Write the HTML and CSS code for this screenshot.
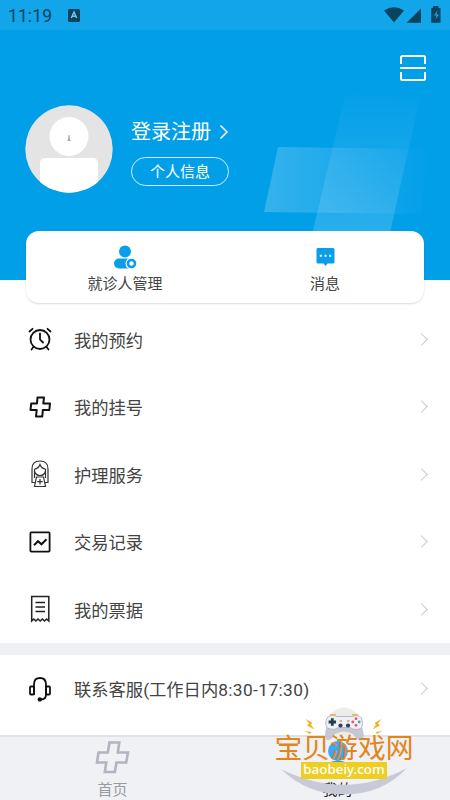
FILE: index.html
```html
<!DOCTYPE html>
<html lang="zh-CN">
<head>
<meta charset="utf-8">
<title>我的</title>
<link rel="stylesheet" href="styles.css">
</head>
<body>
<div class="app">
  <header class="hero">
    <svg class="hero-art" width="450" height="280" viewBox="0 0 450 280" aria-hidden="true">
      <defs>
        <linearGradient id="across" x1="0" x2="1" y1="0" y2="0"><stop offset="0" stop-color="#fff" stop-opacity=".2"/><stop offset="1" stop-color="#fff" stop-opacity="0"/></linearGradient>
        <linearGradient id="down" x1="0" x2="0" y1="0" y2="1"><stop offset="0" stop-color="#fff" stop-opacity=".01"/><stop offset="1" stop-color="#fff" stop-opacity=".19"/></linearGradient>
      </defs>
      <path d="M278 147L429 149L421 214L264 212Z" fill="url(#across)"/>
      <path d="M345 95L420 97L384 260L306 260Z" fill="url(#down)"/>
    </svg>
    <div class="status">
      <span class="clock">11:19</span>
      <svg class="status-app" width="12" height="13" viewBox="0 0 12 13"><rect width="12" height="13" rx="1.5" fill="#08435f"/><path d="M3.300 9L6 3L8.700 9M4.200 7.200H7.800" fill="none" stroke="#7fc4e6" stroke-width="1.400"/></svg>
      <svg class="status-icons" width="58" height="18" viewBox="0 0 58 18"><path d="M0 4.500Q10 -2 20 4.500L10 16.500Z M37 2.500V16.800H22.500Z M49 2V0H54.500V2H56.500V16.800H47.200V2Z" fill="#08435f"/><path d="M53.500 4L50 9.500h2.500L51.300 14L55 8.500h-2.400Z" fill="#18a2e8"/></svg>
    </div>
    <div class="scan">
      <svg width="28" height="28" viewBox="0 0 28 28" fill="none" stroke="#fff" stroke-width="2"><path d="M2 10V3.500Q2 2 3.500 2H24.500Q26 2 26 3.500V10M2 18V24.500Q2 26 3.500 26H24.500Q26 26 26 24.500V18M1 14H27"/></svg>
    </div>
    <div class="profile">
      <svg class="avatar" width="88" height="88" viewBox="0 0 88 88">
        <clipPath id="round"><circle cx="44" cy="44" r="43.700"/></clipPath>
        <g clip-path="url(#round)"><path fill="#e4e4e4" d="M0 0H88V88H0Z"/><circle cx="44" cy="31.500" r="19.500" fill="#fff"/><rect x="15" y="53" width="58" height="48" rx="5" fill="#fff"/><path d="M43.500 30h1l.5 4.500 1 1.500h-4l1-1.500Z" fill="#aaa"/></g>
      </svg>
      <div class="account">
        <a class="login">登录注册<svg width="10" height="16" viewBox="0 0 10 16"><path d="M1.500 1.500L8 8L1.500 14.500" fill="none" stroke="#fff" stroke-width="1.500"/></svg></a>
        <a class="info">个人信息</a>
      </div>
    </div>
  </header>

  <section class="card">
    <a class="shortcut">
      <svg width="24" height="26" viewBox="0 0 24 26"><circle cx="12" cy="7.500" r="6" fill="#0a9de9"/><rect x="1" y="14.500" width="20" height="10" rx="5" fill="#0a9de9"/><circle cx="18.500" cy="19.500" r="6" fill="#fff"/><circle cx="18.500" cy="19.500" r="3.500" fill="#fff" stroke="#0a9de9" stroke-width="2.600"/></svg>
      <span>就诊人管理</span>
    </a>
    <a class="shortcut">
      <svg width="24" height="26" viewBox="0 0 24 26"><path d="M4.500 4H20Q21.500 4 21.500 5.500V18Q21.500 19.500 20 19.500H14.500L12.500 22L10.500 19.500H5Q3.500 19.500 3.500 18V5.500Q3.500 4 4.500 4Z" fill="#0a9de9"/><path d="M6.800 10.800h2v2h-2zm4.700 0h2v2h-2zm4.700 0h2v2h-2z" fill="#fff"/></svg>
      <span>消息</span>
    </a>
  </section>

  <main class="menu">
    <a class="row">
      <svg class="icon" width="26" height="30" viewBox="0 0 26 30" fill="none" stroke="#111" stroke-width="1.800" stroke-linecap="round"><circle cx="13" cy="15.500" r="9.500"/><path d="M13 9.500V15.500L16 18.500M2.500 7.500L5.500 4.800M20.500 4.800L23.500 7.500M6.500 23L4.500 25.500M19.500 23L21.500 25.500"/></svg>
      <span>我的预约</span><i class="chevron"></i>
    </a>
    <a class="row">
      <svg class="icon" width="26" height="30" viewBox="0 0 26 30" fill="none" stroke="#111" stroke-width="2" stroke-linejoin="round"><path d="M10.500 5.500H17L16.300 11.500H23L22.300 18H15.800L15.300 24.500H9L9.700 18H3.500L4.200 11.500H10Z"/></svg>
      <span>我的挂号</span><i class="chevron"></i>
    </a>
    <a class="row">
      <svg class="icon" width="26" height="30" viewBox="0 0 26 30" fill="none" stroke="#333" stroke-width="1.200"><path d="M8 23.500H5V10Q5 2 13 2T21 10V23.500H18M7.500 19V10M18.500 19V10M7.500 10Q11.500 9.500 13 5.500Q14.500 9.500 18.500 10M7.500 12Q8.500 16.500 13 16.500T18.500 12M9.500 18H16.500L18.500 27.500H7.500ZM13 20V25.500M10.300 22.700H15.700"/></svg>
      <span>护理服务</span><i class="chevron"></i>
    </a>
    <a class="row">
      <svg class="icon" width="26" height="30" viewBox="0 0 26 30" fill="none" stroke="#111" stroke-width="1.800"><rect x="3.400" y="5.400" width="19.200" height="19.200" rx="1"/><path d="M7 18.200L11 14.200L14.500 17.300L19.500 12.200" stroke-width="2"/></svg>
      <span>交易记录</span><i class="chevron"></i>
    </a>
    <a class="row">
      <svg class="icon" width="26" height="30" viewBox="0 0 26 30" fill="none" stroke="#222" stroke-width="1.500"><path d="M4.700 27V2.500H21.800V27L19.700 25L17.500 27L15.300 25L13.200 27L11 25L8.900 27L6.800 25ZM8.500 8.500H18M8.500 13H18M8.500 17.500H18"/></svg>
      <span>我的票据</span><i class="chevron"></i>
    </a>
    <div class="divider"></div>
    <a class="row">
      <svg class="icon" width="26" height="30" viewBox="0 0 26 30" fill="none" stroke="#111" stroke-width="1.800"><path d="M7 21V10.500Q7 4 13 4T19 10.500V20.500Q19 25.500 14 25.500"/><rect x="3" y="12.500" width="4" height="8" rx="1"/><rect x="19" y="12.500" width="4" height="8" rx="1"/><circle cx="12.800" cy="25.400" r="1.300" fill="#111"/></svg>
      <span>联系客服(工作日内<b class="hours">8:30-17:30)</b></span><i class="chevron"></i>
    </a>
  </main>

  <nav class="tabs">
    <a class="tab">
      <svg width="36" height="36" viewBox="0 0 36 36" fill="none" stroke="#b3b3c2" stroke-width="2.600"><path d="M14.500 3.500H24.300L22.800 13.500H33L31.200 23.500H21.500L19.800 33H9.800L11.300 23.500H2L3.500 13.500H12.800Z"/></svg>
      <span>首页</span>
    </a>
    <a class="tab active">
      <svg width="36" height="36" viewBox="0 0 36 36"><circle cx="18" cy="12" r="10" fill="#42a5f5"/><path d="M8 24Q18 19 28 24Z" fill="#2aa0e8"/></svg>
      <span>我的</span>
    </a>
  </nav>

  <div class="mark">
    <svg class="mark-art" width="146" height="100" viewBox="270 700 146 100" aria-hidden="true">
      <path d="M281 769Q345 801 407 768Q382 794.500 344 794.500Q307 794.500 281 769Z" fill="#c9cad8"/>
      <circle cx="344" cy="724" r="16.500" fill="#ececec"/>
      <path d="M327 725Q323 737 327 740Q331 741 335 734Q344 729 353 734Q358 742 362 740Q366 736 361 725Z" fill="#c5c7d3"/>
      <path d="M327 718Q330 714 337 716.500H352Q359 714 361.500 718Q365 729 357 729.500Q353 730 350 727.500H339Q334 731 328 728.500Q324 725 327 718Z" fill="#eef0f5" stroke="#a9acbc" stroke-width=".8"/>
      <path d="M330 714.800H336M352 714.800H358" fill="none" stroke="#e9b84a" stroke-width="1.600"/>
      <path d="M332.300 718.300V725.700M328.600 722H336" stroke="#263c50" stroke-width="2.800"/>
      <circle cx="340.500" cy="725.500" r="2.100" fill="#2d4257"/><circle cx="348" cy="725.500" r="2.100" fill="#2d4257"/>
      <path d="M339.500 721H342M347 721H349.500" stroke="#d4606c" stroke-width="1.200"/>
      <circle cx="356" cy="718.700" r="1.400" fill="#e45b65"/><circle cx="356" cy="725.300" r="1.400" fill="#e45b65"/><circle cx="352.800" cy="722" r="1.400" fill="#e45b65"/><circle cx="359.200" cy="722" r="1.400" fill="#48a7b8"/>
      <path d="M305.500 719L312 722.500L311.200 725L314.500 729.500L307 725.500L309 723.500ZM381.500 719L375 722.500L375.800 725L372.500 729.500L380 725.500L378 723.500ZM304.500 731L311.500 732L310 734ZM382.500 731L375.500 732L377 734Z" fill="#f3b324"/>
    </svg>
    <span class="mark-title">宝贝游戏网</span>
    <span class="mark-site">baobeiy.com</span>
  </div>
</div>
</body>
</html>
```

FILE: styles.css
```css
* { box-sizing: border-box; }
body { margin: 0; font-family: Roboto, "Noto Sans CJK SC", sans-serif; color: #444; background: #fff; }
.app { position: relative; width: 450px; height: 800px; overflow: hidden; display: flex; flex-direction: column; }
svg { display: block; flex: none; }

.hero { position: relative; height: 280px; flex: none; background: #029fe9; color: #fff; }
.hero-art { position: absolute; left: 0; top: 0; }
.status { position: relative; height: 30px; display: flex; align-items: center; padding: 0 8px; background: rgba(255, 255, 255, .07); color: #08435f; }
.clock { font-size: 17.5px; line-height: 30px; letter-spacing: .1px; padding-top: 2px; }
.status-app { margin-left: 16px; }
.status-icons { margin-left: auto; }
.scan { position: relative; display: flex; justify-content: flex-end; padding: 24px 23px 0 0; height: 75px; }
.profile { position: relative; display: flex; padding-left: 25px; gap: 18px; }
.account { padding-top: 13px; display: flex; flex-direction: column; align-items: flex-start; }
.login { display: flex; align-items: center; gap: 8px; font-size: 20px; line-height: 28px; }
.info { margin-top: 11px; width: 98px; height: 29px; border: 1px solid rgba(255, 255, 255, .8); border-radius: 15px; font-size: 15px; line-height: 28px; text-align: center; }

.card { position: relative; display: flex; flex: none; height: 72px; margin: -49px 26px 0; border-radius: 13px; background: #fff; box-shadow: 0 1px 2px rgba(0, 0, 0, .15); }
.shortcut { flex: 1; display: flex; flex-direction: column; align-items: center; padding-top: 13px; font-size: 15px; line-height: 22px; }
.shortcut:first-child { padding-right: 1px; }
.shortcut:last-child { padding-left: 1px; }
.shortcut span { margin-top: 3px; }

.menu { flex: none; padding-top: 2px; }
.row { height: 67.5px; display: flex; align-items: center; padding: 1px 22px 0 27px; font-size: 17.3px; }
.row span { margin-left: 21px; }
.hours { font-weight: 400; letter-spacing: .4px; }
.chevron { width: 9px; height: 9px; margin: 0 2px 0 auto; border: solid #c8c8c8; border-width: 1px 1px 0 0; transform: rotate(45deg); }
.divider { height: 12px; background: #eff0f3; }

.tabs { position: absolute; left: 0; right: 0; bottom: 0; height: 65px; display: flex; background: #f0f1f4; border-top: 2px solid #e1e2e5; }
.tab { flex: 1; display: flex; flex-direction: column; align-items: center; padding-top: 2px; font-size: 15px; line-height: 22px; color: #9a9a9a; }
.tab span { margin-top: 4px; }
.active { color: #222; }

.mark { position: absolute; left: 270px; top: 700px; width: 146px; height: 100px; display: flex; flex-direction: column; align-items: center; padding: 36px 0 0 2px; }
.mark-art { position: absolute; left: 0; top: 0; }
.mark-title { position: relative; height: 26px; font-size: 27.8px; line-height: 26px; color: #e2851b; white-space: nowrap; }
.mark-site { position: relative; width: 86px; height: 17px; background: #edcf24; color: #fff; font: 500 13.4px/15px "Noto Sans", sans-serif; text-align: center; }
```
